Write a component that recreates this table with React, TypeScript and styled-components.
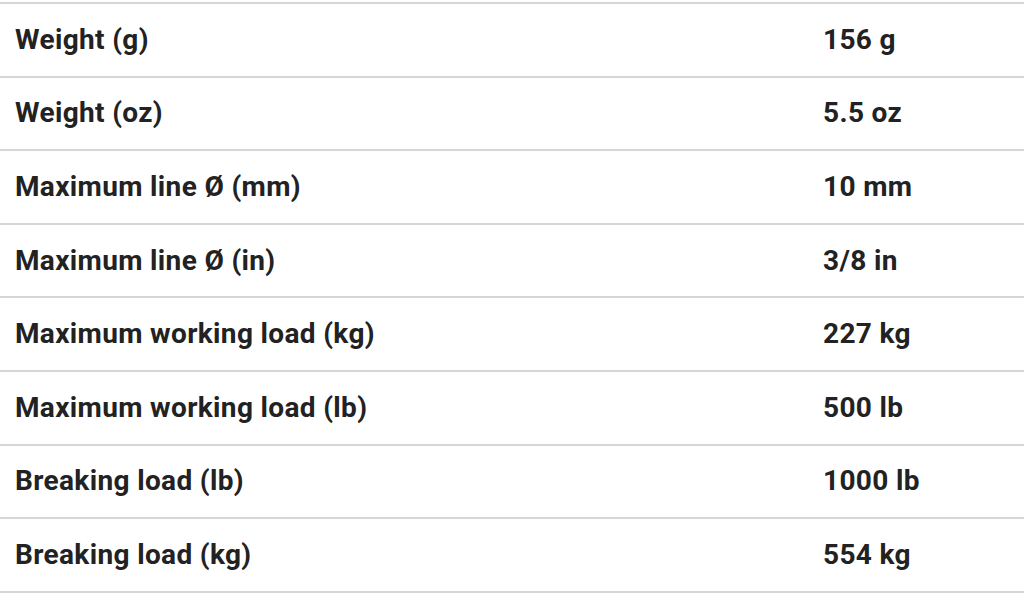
import styled, { createGlobalStyle } from "styled-components"

const Global = createGlobalStyle`
  html, body {
    margin: 0;
    padding: 0;
    background: #ffffff;
  }
  body {
    font-family: Roboto, "Liberation Sans", Arial, sans-serif;
  }
`

const Table = styled.div`
  margin-top: 2px;
  width: 1024px;
  border-top: 2px solid #d6d6d6;
`

const Row = styled.div`
  display: grid;
  grid-template-columns: 808px 1fr;
  align-items: center;
  box-sizing: border-box;
  height: 73.6px;
  padding-left: 15px;
  border-bottom: 2px solid #d6d6d6;
`

const Label = styled.div`
  font-size: 28px;
  line-height: 32px;
  font-weight: 700;
  letter-spacing: 0.35px;
  color: #222222;
  white-space: nowrap;
`

const Value = styled(Label)``

const specs: [string, string][] = [
  ["Weight (g)", "156 g"],
  ["Weight (oz)", "5.5 oz"],
  ["Maximum line Ø (mm)", "10 mm"],
  ["Maximum line Ø (in)", "3/8 in"],
  ["Maximum working load (kg)", "227 kg"],
  ["Maximum working load (lb)", "500 lb"],
  ["Breaking load (lb)", "1000 lb"],
  ["Breaking load (kg)", "554 kg"],
]

const App: React.FC = () => {
  return (
    <>
      <Global />
      <Table>
        {specs.map(([label, value]) => (
          <Row key={label}>
            <Label>{label}</Label>
            <Value>{value}</Value>
          </Row>
        ))}
      </Table>
    </>
  )
}

export default App
